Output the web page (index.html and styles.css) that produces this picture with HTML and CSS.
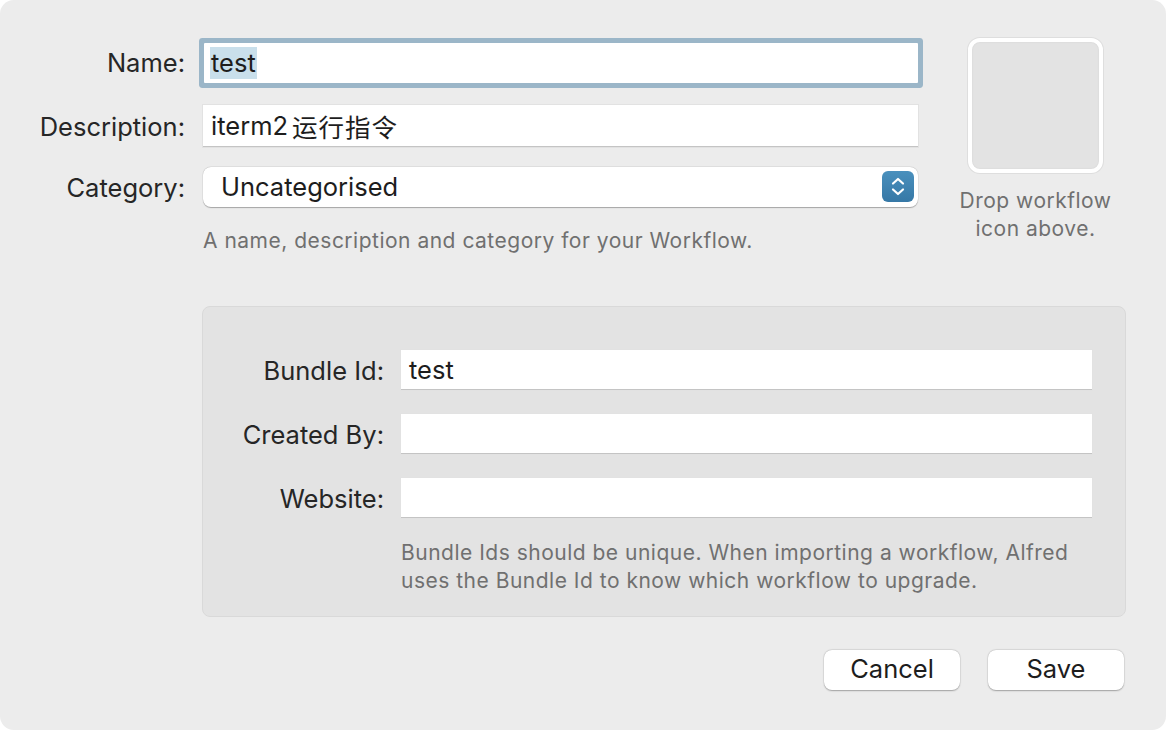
FILE: index.html
```html
<!DOCTYPE html>
<html>
<head>
<meta charset="utf-8">
<link rel="stylesheet" href="styles.css">
</head>
<body>
<div class="window">
  <div class="top">
    <div class="form">
      <div class="row row-name">
        <label class="label">Name:</label>
        <div class="field focused"><span class="sel">test</span></div>
      </div>
      <div class="row row-desc">
        <label class="label">Description:</label>
        <div class="field">iterm2<span class="cjk">运行指令</span></div>
      </div>
      <div class="row row-cat">
        <label class="label">Category:</label>
        <div class="popup">
          <span>Uncategorised</span>
          <span class="stepper">
            <svg width="32" height="31" viewBox="0 0 32 31">
              <path d="M11 12.5 L16 8 L21 12.5" fill="none" stroke="#fff" stroke-width="2.2" stroke-linecap="round" stroke-linejoin="round"/>
              <path d="M11 18.5 L16 23 L21 18.5" fill="none" stroke="#fff" stroke-width="2.2" stroke-linecap="round" stroke-linejoin="round"/>
            </svg>
          </span>
        </div>
      </div>
      <p class="hint hint-top">A name, description and category for your Workflow.</p>
    </div>
    <div class="icon-col">
      <div class="well"></div>
      <p class="hint well-hint">Drop workflow<br>icon above.</p>
    </div>
  </div>

  <div class="bundle">
    <div class="brow">
      <label class="label blabel">Bundle Id:</label>
      <div class="field bfield">test</div>
    </div>
    <div class="brow">
      <label class="label blabel">Created By:</label>
      <div class="field bfield"></div>
    </div>
    <div class="brow">
      <label class="label blabel">Website:</label>
      <div class="field bfield"></div>
    </div>
    <p class="hint bhint">Bundle Ids should be unique. When importing a workflow, Alfred<br>uses the Bundle Id to know which workflow to upgrade.</p>
  </div>

  <div class="buttons">
    <button class="btn">Cancel</button>
    <button class="btn">Save</button>
  </div>
</div>
</body>
</html>
```

FILE: styles.css
```css
* { box-sizing: border-box; }
html, body {
  margin: 0;
  padding: 0;
  background: #ffffff;
}
body {
  font-family: "Inter", "Noto Sans CJK SC", sans-serif;
  color: #262626;
}
.window {
  width: 1166px;
  height: 730px;
  background: #ececec;
  border-radius: 14px;
  overflow: hidden;
  padding-top: 38px;
}
.top {
  display: flex;
  height: 268px;
}
.form {
  width: 918px;
}
.row {
  display: flex;
  align-items: center;
}
.label {
  width: 185px;
  text-align: right;
  font-size: 25.5px;
  color: #262626;
  flex: none;
}
.row .label { margin-right: 18px; }
.row-name { height: 49px; }
.row-desc { height: 42px; margin-top: 18px; }
.row-cat { height: 40px; margin-top: 20px; }

.field {
  flex: 1;
  height: 42px;
  background: #ffffff;
  border-bottom: 1px solid #c4c4c4;
  box-shadow: 0 0 0 1px #e2e2e2;
  font-size: 25.5px;
  color: #1d1d1d;
  display: flex;
  align-items: center;
  padding-left: 8px;
}
.cjk {
  margin-left: 4px;
  letter-spacing: 1px;
}
.field.focused {
  height: 40px;
  box-shadow: 0 0 0 5px #9bb6c8;
  border-bottom: none;
  border-radius: 1px;
  margin-left: 1px;
  margin-right: 0;
  padding-left: 6px;
}
.sel {
  background: #c9dfeb;
  line-height: 32px;
  padding: 0 1px 0 1px;
}
.popup {
  flex: 1;
  height: 40px;
  background: #ffffff;
  border-radius: 8px;
  box-shadow: 0 0.5px 1px rgba(0,0,0,0.28), 0 0 0 0.5px rgba(0,0,0,0.06);
  display: flex;
  align-items: center;
  justify-content: space-between;
  padding-left: 18px;
  padding-right: 4px;
  padding-bottom: 1px;
  font-size: 25.5px;
  color: #1d1d1d;
}
.stepper {
  width: 32px;
  height: 31px;
  border-radius: 6px;
  background: linear-gradient(#4a90bd, #3678a6);
  display: flex;
}
.hint {
  margin: 0;
  font-size: 21px;
  color: #707070;
  letter-spacing: 0.5px;
}
.hint-top {
  margin-top: 21px;
  padding-left: 203px;
}
.icon-col {
  margin-left: 50px;
  width: 135px;
  display: flex;
  flex-direction: column;
  align-items: center;
}
.well {
  width: 135px;
  height: 135px;
  flex: none;
  border-radius: 12px;
  background: #e3e3e3;
  border: 4px solid #ffffff;
  box-shadow: 0 0 0 1px #dedede, inset 0 0 2px rgba(0,0,0,0.08);
}
.well-hint {
  margin-top: 14px;
  width: 190px;
  text-align: center;
  line-height: 28px;
}

.bundle {
  margin-left: 202px;
  width: 924px;
  height: 311px;
  background: #e3e3e3;
  border: 1px solid #d9d9d9;
  border-radius: 8px;
  padding-top: 43px;
  padding-right: 33px;
}
.brow {
  display: flex;
  align-items: center;
  height: 40px;
  margin-bottom: 24px;
}
.blabel {
  width: 181px;
  margin-right: 17px;
}
.bfield {
  height: 40px;
}
.bhint {
  margin-left: 198px;
  margin-top: -3px;
  line-height: 28px;
}
.buttons {
  display: flex;
  justify-content: flex-end;
  gap: 28px;
  padding-right: 42px;
  margin-top: 33px;
}
.btn {
  width: 136px;
  height: 40px;
  border: none;
  border-radius: 8px;
  background: #ffffff;
  box-shadow: 0 0.5px 1.5px rgba(0,0,0,0.3), 0 0 0 0.5px rgba(0,0,0,0.06);
  font-family: "Inter", sans-serif;
  font-size: 25.5px;
  color: #1d1d1d;
  padding: 0 0 3px 0;
}
```
